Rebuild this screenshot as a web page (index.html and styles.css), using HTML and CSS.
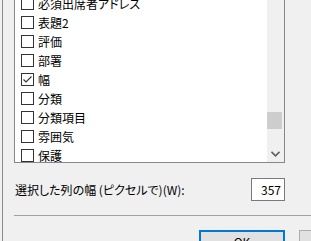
FILE: index.html
```html
<!DOCTYPE html>
<html lang="ja">
<head>
    <meta charset="UTF-8">
    <title>列の幅</title>
    <link rel="stylesheet" href="styles.css">
</head>
<body>
    <div class="frame">
        <div class="listbox">
            <ul class="items">
                <li class="row"><span class="check"></span>必須出席者アドレス</li>
                <li class="row"><span class="check"></span>表題2</li>
                <li class="row"><span class="check"></span>評価</li>
                <li class="row"><span class="check"></span>部署</li>
                <li class="row"><span class="check checked">
                    <svg width="11" height="11" viewBox="0 0 11 11"><path d="M1.5 5.5 L4 8 L9.5 2.5" fill="none" stroke="#333" stroke-width="1.1"/></svg>
                </span>幅</li>
                <li class="row"><span class="check"></span>分類</li>
                <li class="row"><span class="check"></span>分類項目</li>
                <li class="row"><span class="check"></span>雰囲気</li>
                <li class="row"><span class="check"></span>保護</li>
            </ul>
            <div class="scrollbar">
                <div class="thumb"></div>
                <div class="arrow">
                    <svg width="9" height="6" viewBox="0 0 9 6"><path d="M0.5 0.8 L4.5 4.8 L8.5 0.8" fill="none" stroke="#606060" stroke-width="1.6"/></svg>
                </div>
            </div>
        </div>

        <div class="width-row">
            <label class="width-label">選択した列の幅 (ピクセルで)(W):</label>
            <div class="width-input">357</div>
        </div>

        <div class="separator"></div>

        <div class="buttons">
            <button class="btn default">OK</button>
            <button class="btn">キャンセル</button>
        </div>
    </div>
</body>
</html>
```

FILE: styles.css
```css
html, body {
    margin: 0;
    height: 100%;
    overflow: hidden;
}

body {
    background: #f0f0f0;
    font-family: "Noto Sans CJK JP", "Noto Sans", sans-serif;
    font-size: 12px;
    font-feature-settings: "palt";
    color: #000;
}

.frame {
    margin-left: 2px;
    height: 241px;
    border-left: 1px solid #8c8c8c;
    padding-left: 11px;
    box-sizing: border-box;
}

/* list of columns */
.listbox {
    display: flex;
    width: 271px;
    height: 163px;
    box-sizing: border-box;
    border: 1px solid #828790;
    border-top: none;
    background: #fff;
    overflow: hidden;
}

.items {
    flex: 1;
    list-style: none;
    margin: -6px 0 0 0;
    padding: 0 0 0 6px;
}

.row {
    display: flex;
    align-items: center;
    gap: 4px;
    height: 19px;
    white-space: nowrap;
}

.check {
    display: flex;
    align-items: center;
    justify-content: center;
    width: 13px;
    height: 13px;
    box-sizing: border-box;
    border: 1px solid #333;
    background: #fff;
    flex-shrink: 0;
}

.scrollbar {
    display: flex;
    flex-direction: column;
    width: 17px;
    background: #f0f0f0;
}

.thumb {
    margin-top: 112px;
    margin-right: 2px;
    height: 17px;
    background: #cdcdcd;
}

.arrow {
    margin-top: auto;
    height: 17px;
    display: flex;
    align-items: center;
    justify-content: center;
    padding-right: 1px;
}

/* width field */
.width-row {
    display: flex;
    align-items: center;
    justify-content: space-between;
    width: 271px;
    margin-top: 15px;
}

.width-label {
    padding-left: 1px;
}

.width-input {
    width: 34px;
    height: 23px;
    box-sizing: border-box;
    border: 1px solid #7a7a7a;
    background: #fff;
    text-align: right;
    padding-right: 3px;
    line-height: 21px;
}

.separator {
    margin-top: 14px;
    height: 1px;
    background: #a0a0a0;
}

.buttons {
    display: flex;
    gap: 14px;
    margin-top: 14px;
    padding-left: 185px;
}

.btn {
    flex-shrink: 0;
    width: 86px;
    height: 23px;
    box-sizing: border-box;
    border: 1px solid #adadad;
    background: #e1e1e1;
    font: inherit;
    padding: 0;
}

.btn.default {
    border: 2px solid #0078d7;
}
```
